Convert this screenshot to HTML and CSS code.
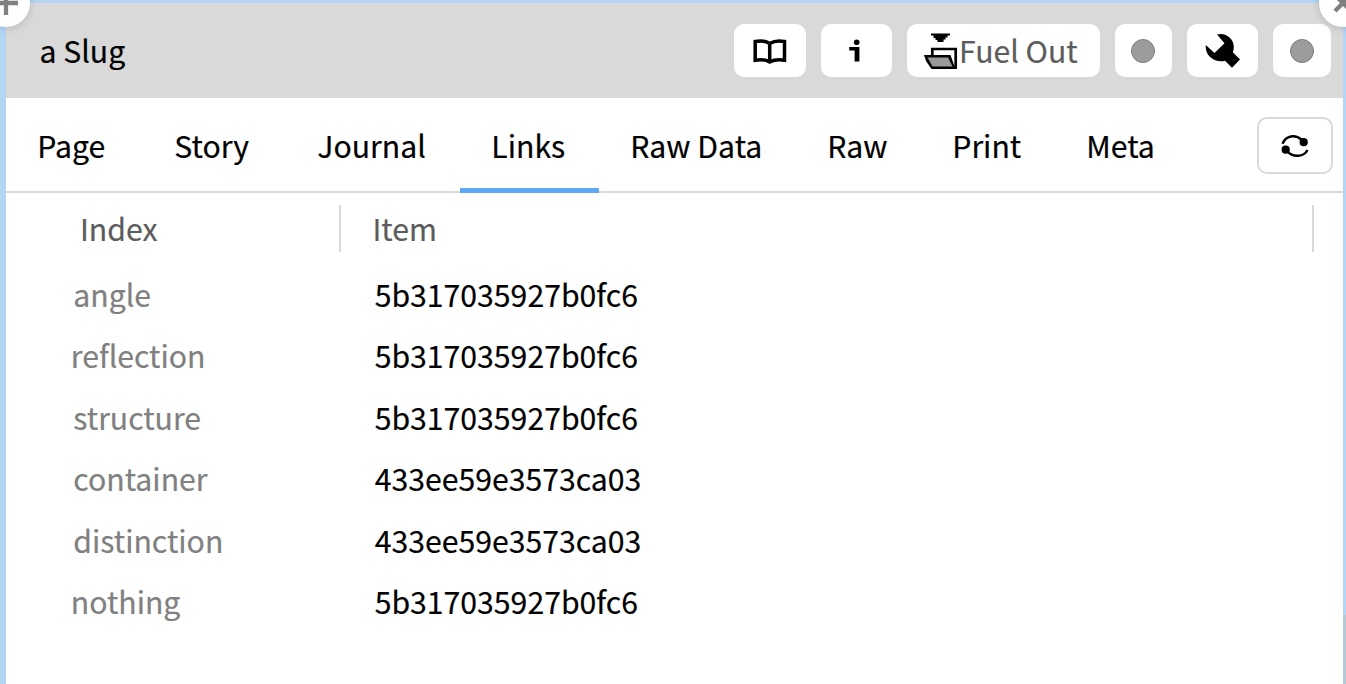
FILE: index.html
```html
<!DOCTYPE html>
<html lang="en">
<head>
<meta charset="utf-8">
<title>a Slug</title>
<link rel="stylesheet" href="styles.css">
</head>
<body>
<main class="pane">
  <header class="titlebar">
    <h1 class="title">a Slug</h1>
    <div class="actions">
      <button class="action wide" aria-label="Browse"><svg width="36" height="28" viewBox="0 0 36 28" fill="none" stroke="#000" stroke-width="3.5"><path d="M3.200 4.500Q12 2.800 17.700 6.400Q24 2.800 32.500 4.500V23.2Q23.500 21.800 17.700 25Q12.500 21.800 3.200 23.200ZM17.700 6V25"/></svg></button>
      <button class="action wide" aria-label="Information"><svg width="20" height="24" viewBox="0 0 20 24"><circle cx="9.700" cy="3.300" r="2.800"/><path d="M2.200 8H12.400V22.500H7.600V11.500H2.200Z"/></svg></button>
      <button class="action fuel"><svg width="34" height="40" viewBox="0 0 34 40"><path d="M7 2.500H26V4.500H23.500V6.500H21.500V8.500H19.500V11H13.500V9H11.500V7H9.500V4.500H7Z"/><path d="M8.300 25V18H31.700V36.700H9" fill="none" stroke="#000" stroke-width="2.700"/><path d="M0 24H26.500L31.500 38H7.500L2 30Z"/><path d="M3.500 26.500H24L28.500 35.500H8.500Z" fill="#999"/></svg><span>Fuel Out</span></button>
      <button class="action" aria-label="Status"><i class="dot"></i></button>
      <button class="action wide" aria-label="Tools"><svg width="36" height="36" viewBox="0 0 36 36"><path d="M12 1.500C20 -1 28.800 5 28.800 14Q28.800 17 27.800 19.200L35 26.500L27 34.700L20 27.700C11 30.500 -.5 23.500 .8 12L9.500 20L19.500 10.300Z"/></svg></button>
      <button class="action" aria-label="Status"><i class="dot"></i></button>
    </div>
  </header>
  <nav class="tabs">
    <a class="tab page">Page</a>
    <a class="tab story">Story</a>
    <a class="tab journal">Journal</a>
    <a class="tab links active">Links</a>
    <a class="tab rawdata">Raw Data</a>
    <a class="tab raw">Raw</a>
    <a class="tab print">Print</a>
    <a class="tab meta">Meta</a>
    <button class="refresh" aria-label="Refresh"><svg width="30" height="24" viewBox="0 0 30 24"><path d="M2.500 9.700C6 1.500 15 0 22 6M27.500 16C24 23 13 24 7 17" fill="none" stroke="#000" stroke-width="2.400"/><circle cx="23.700" cy="8.200" r="4.100"/><circle cx="5.700" cy="15.700" r="4.100"/></svg></button>
  </nav>
  <section class="table">
    <div class="row head"><span class="index">Index</span><span class="item">Item</span></div>
    <div class="row"><span class="index">angle</span><span class="item">5b317035927b0fc6</span></div>
    <div class="row"><span class="index tight">reflection</span><span class="item">5b317035927b0fc6</span></div>
    <div class="row"><span class="index">structure</span><span class="item">5b317035927b0fc6</span></div>
    <div class="row"><span class="index">container</span><span class="item">433ee59e3573ca03</span></div>
    <div class="row"><span class="index">distinction</span><span class="item">433ee59e3573ca03</span></div>
    <div class="row"><span class="index tight">nothing</span><span class="item">5b317035927b0fc6</span></div>
  </section>
</main>
<div class="edge"></div>
<div class="handle add"><svg width="48" height="48" viewBox="0 0 48 48"><path d="M24 12V36M12 24H36" stroke="#808080" stroke-width="4.300"/></svg></div>
<div class="handle close"><svg width="48" height="48" viewBox="0 0 48 48"><path d="M16 32L32 16M16 16L32 32" stroke="#808080" stroke-width="4.300"/></svg></div>
</body>
</html>
```
FILE: styles.css
```css
* { box-sizing: border-box; }
body {
  margin: 0;
  height: 684px;
  overflow: hidden;
  position: relative;
  padding: 3px 3px 0 6px;
  background: #b5d5f4;
  font: 400 30.2px "Noto Sans CJK SC", "Open Sans", sans-serif;
  -webkit-text-stroke: .2px;
  color: #000;
}
.pane { height: 681px; background: #fff; }
.titlebar {
  height: 95px;
  display: flex;
  align-items: center;
  justify-content: space-between;
  padding: 0 12.5px 0 33.5px;
  background: #d9d9d9;
}
.title { margin: 0; font-size: 30.2px; font-weight: 400; line-height: 95px; }
.actions { display: flex; gap: 14.6px; }
.action {
  display: flex;
  align-items: center;
  justify-content: center;
  width: 57.5px;
  height: 53px;
  padding: 0;
  border: 0;
  border-radius: 10px;
  background: #fff;
  font: inherit;
  line-height: 53px;
}
.wide { width: 71.7px; }
.fuel { width: 193px; justify-content: flex-start; gap: 1px; padding-left: 17px; color: #5c5c5c; }
.action svg, .refresh svg, .handle svg { display: block; flex: none; }
.dot { width: 24px; height: 24px; border: 1.5px solid #7c7c7c; border-radius: 50%; background: #9c9c9c; }
.tabs {
  height: 95px;
  display: flex;
  align-items: flex-start;
  border-bottom: 2px solid #d9d9d9;
}
.tab { height: 95px; line-height: 95px; padding-left: 31.3px; white-space: nowrap; }
.page { width: 137px; }
.story { width: 143px; }
.journal { width: 174px; }
.links { width: 139px; }
.rawdata { width: 197px; }
.raw { width: 125px; }
.print { width: 134px; }
.meta { width: 130px; }
.active { border-bottom: 5px solid #5fa8f8; }
.refresh {
  width: 76px;
  height: 57px;
  margin: 19px 10px 0 auto;
  padding: 0;
  display: flex;
  align-items: center;
  justify-content: center;
  border: 2px solid #d9d9d9;
  border-radius: 10px;
  background: #fff;
}
.row { display: grid; grid-template-columns: 335px 1fr; height: 61.4px; line-height: 61.4px; }
.index { padding-left: 67.3px; color: #808080; }
.tight { padding-left: 64.8px; }
.item { padding-left: 33.7px; }
.head { height: 71px; line-height: 46px; padding: 12px 29px 12px 0; }
.head .index { padding-left: 74px; color: #5c5c5c; border-right: 2px solid #d9d9d9; }
.head .item { padding-left: 31.5px; color: #5c5c5c; border-right: 2px solid #d9d9d9; }
.edge { position: absolute; right: 0; top: 615px; width: 3px; height: 69px; background: #b7c8d5; }
.handle {
  position: absolute;
  top: -21px;
  width: 48px;
  height: 48px;
  border-radius: 50%;
  background: #fff;
  box-shadow: 0 1px 8px rgba(0, 0, 0, .16);
}
.add { left: -18px; }
.close { right: -21px; }
```
